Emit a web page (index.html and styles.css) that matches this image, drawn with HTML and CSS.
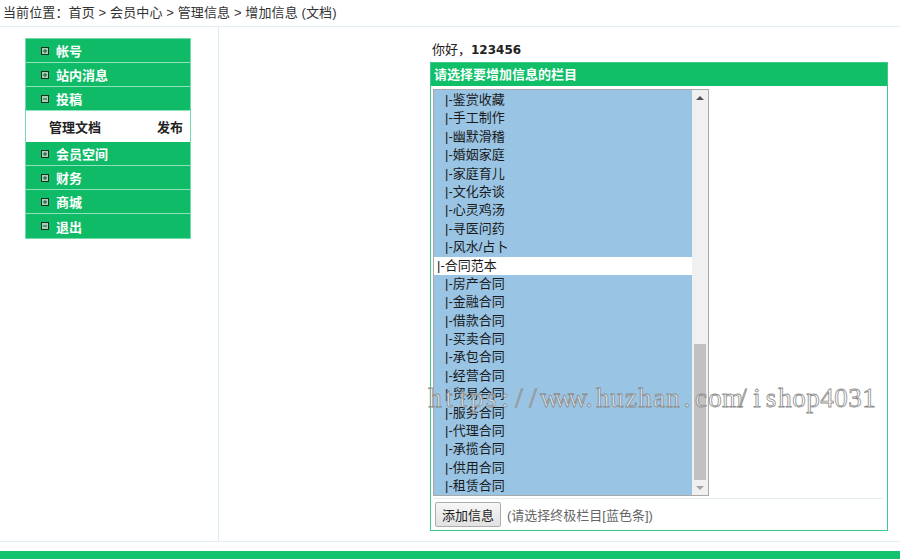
FILE: index.html
```html
<!DOCTYPE html>
<html lang="zh-CN">
<head>
<meta charset="utf-8">
<title>增加信息</title>
<link rel="stylesheet" href="styles.css">
</head>
<body>
<div class="crumb">当前位置：首页 &gt; 会员中心 &gt; 管理信息 &gt; 增加信息 (文档)</div>
<div class="main">
  <aside class="side">
    <ul class="menu">
      <li class="mi"><svg class="ico" viewBox="0 0 8 8"><rect x="0.5" y="0.5" width="7" height="7"/><path d="M2 4H6M4 2V6"/></svg>帐号</li>
      <li class="mi"><svg class="ico" viewBox="0 0 8 8"><rect x="0.5" y="0.5" width="7" height="7"/><path d="M2 4H6M4 2V6"/></svg>站内消息</li>
      <li class="mi"><svg class="ico" viewBox="0 0 8 8"><rect x="0.5" y="0.5" width="7" height="7"/><path d="M2 4H6"/></svg>投稿</li>
      <li class="sub"><span>管理文档</span><span>发布</span></li>
      <li class="mi"><svg class="ico" viewBox="0 0 8 8"><rect x="0.5" y="0.5" width="7" height="7"/><path d="M2 4H6M4 2V6"/></svg>会员空间</li>
      <li class="mi"><svg class="ico" viewBox="0 0 8 8"><rect x="0.5" y="0.5" width="7" height="7"/><path d="M2 4H6M4 2V6"/></svg>财务</li>
      <li class="mi"><svg class="ico" viewBox="0 0 8 8"><rect x="0.5" y="0.5" width="7" height="7"/><path d="M2 4H6M4 2V6"/></svg>商城</li>
      <li class="mi"><svg class="ico" viewBox="0 0 8 8"><rect x="0.5" y="0.5" width="7" height="7"/><path d="M2 4H6"/></svg>退出</li>
    </ul>
  </aside>
  <section class="content">
    <p class="hello">你好，<b class="uname">123456</b></p>
    <div class="panel">
      <div class="panel-head">请选择要增加信息的栏目</div>
      <div class="panel-body">
        <div class="listbox">
          <div class="opts">
            <div class="opt child">|-鉴赏收藏</div>
            <div class="opt child">|-手工制作</div>
            <div class="opt child">|-幽默滑稽</div>
            <div class="opt child">|-婚姻家庭</div>
            <div class="opt child">|-家庭育儿</div>
            <div class="opt child">|-文化杂谈</div>
            <div class="opt child">|-心灵鸡汤</div>
            <div class="opt child">|-寻医问药</div>
            <div class="opt child">|-风水/占卜</div>
            <div class="opt top">|-合同范本</div>
            <div class="opt child">|-房产合同</div>
            <div class="opt child">|-金融合同</div>
            <div class="opt child">|-借款合同</div>
            <div class="opt child">|-买卖合同</div>
            <div class="opt child">|-承包合同</div>
            <div class="opt child">|-经营合同</div>
            <div class="opt child">|-贸易合同</div>
            <div class="opt child">|-服务合同</div>
            <div class="opt child">|-代理合同</div>
            <div class="opt child">|-承揽合同</div>
            <div class="opt child">|-供用合同</div>
            <div class="opt child">|-租赁合同</div>
          </div>
          <div class="sbar">
            <div class="arr up"></div>
            <div class="track"><div class="thumb"></div></div>
            <div class="arr down"></div>
          </div>
        </div>
        <div class="actions">
          <button class="btn" type="button">添加信息</button>
          <span class="hint">(请选择终极栏目[蓝色条])</span>
        </div>
      </div>
    </div>
  </section>
</div>
<div class="foot"></div>
<div class="wm"><span>h</span><span>t</span><span>t</span><span>p</span><span>s</span><span>:</span><span>/</span><span>/</span><span>w</span><span>w</span><span>w</span><span>.</span><span>h</span><span>u</span><span>z</span><span>h</span><span>a</span><span>n</span><span>.</span><span>c</span><span>o</span><span>m</span><span>/</span><span>i</span><span>s</span><span>h</span><span>o</span><span>p</span><span>4</span><span>0</span><span>3</span><span>1</span></div>
</body>
</html>
```

FILE: styles.css
```css
html, body {
  margin: 0;
  padding: 0;
  overflow: hidden;
}
body {
  width: 900px;
  height: 559px;
  background: #fff;
  font-family: "Liberation Sans", "Noto Sans CJK SC", sans-serif;
  font-size: 13px;
  color: #333;
  position: relative;
}
.crumb {
  height: 26px;
  line-height: 26px;
  padding-left: 3px;
  border-bottom: 1px solid #dff0f6;
  color: #333;
  letter-spacing: 0.12px;
}
.main {
  display: flex;
  height: 514px;
  border-bottom: 1px solid #dff0f6;
}
.side {
  width: 218px;
  border-right: 1px solid #dceef5;
  flex: none;
}
.menu {
  list-style: none;
  margin: 11px 0 0 25px;
  padding: 0;
  width: 166px;
  box-sizing: border-box;
  border: 1px solid #72d9aa;
}
.mi {
  height: 23px;
  border-bottom: 1px solid #8fe2bb;
  background: #0fbb66;
  color: #fff;
  font-weight: bold;
  display: flex;
  align-items: center;
  padding-left: 15px;
}
.mi:last-child {
  border-bottom: 0;
  height: 24px;
}
.ico {
  width: 8px;
  height: 8px;
  margin-right: 7px;
  flex: none;
}
.ico rect {
  fill: #a9ceb5;
  stroke: #12301f;
  stroke-width: 1;
}
.ico path {
  stroke: #24503a;
  stroke-width: 1;
  fill: none;
}
.sub {
  height: 31px;
  display: flex;
  align-items: center;
  justify-content: space-between;
  padding: 0 7px 0 23px;
  font-weight: bold;
  color: #222;
  background: #fff;
}
.content {
  flex: 1;
  padding: 13px 0 0 211px;
}
.hello {
  margin: 0 0 2px 2px;
  line-height: 20px;
  color: #222;
}
.uname {
  font-family: "DejaVu Sans", sans-serif;
  font-size: 12px;
}
.panel {
  width: 458px;
  box-sizing: border-box;
  border: 1px solid #3cc98a;
}
.panel-head {
  height: 23px;
  line-height: 23px;
  background: #10bf68;
  color: #fff;
  font-weight: bold;
  padding-left: 3px;
}
.panel-body {
  padding: 3px 2px 2px 2px;
}
.listbox {
  width: 276px;
  height: 407px;
  box-sizing: border-box;
  border: 1px solid #a9a9a9;
  display: flex;
  overflow: hidden;
}
.opts {
  flex: 1;
  background: #99c4e4;
  overflow: hidden;
  padding-top: 1px;
}
.opt {
  height: 18.4px;
  line-height: 18.4px;
  color: #1a1a1a;
  white-space: nowrap;
}
.opt.child {
  padding-left: 11px;
}
.opt.top {
  padding-left: 3px;
  background: #fff;
}
.sbar {
  width: 16px;
  flex: none;
  background: #f0f0f0;
  display: flex;
  flex-direction: column;
}
.arr {
  height: 16px;
  flex: none;
  display: flex;
  align-items: center;
  justify-content: center;
}
.arr.up::before {
  content: "";
  border-left: 4px solid transparent;
  border-right: 4px solid transparent;
  border-bottom: 4px solid #505050;
}
.arr.down {
  height: 15px;
}
.arr.down::before {
  content: "";
  border-left: 4px solid transparent;
  border-right: 4px solid transparent;
  border-top: 4px solid #a3a3a3;
}
.track {
  flex: 1;
  display: flex;
  flex-direction: column;
  justify-content: flex-end;
  padding: 0 2px;
}
.thumb {
  height: 136px;
  background: #c1c1c1;
}
.actions {
  margin: 2px 2px 0 1px;
  border-top: 1px solid #e2eeee;
  padding: 3px 0 1px 0;
  display: flex;
  align-items: center;
}
.btn {
  height: 25px;
  padding: 0 6px;
  margin: 0 0 0 1px;
  font-family: "Liberation Sans", "Noto Sans CJK SC", sans-serif;
  font-size: 13px;
  color: #222;
  border: 1px solid #adadad;
  border-radius: 2px;
  background: linear-gradient(#f7f7f7, #e1e1e1);
}
.hint {
  margin-left: 6px;
  color: #666;
}
.foot {
  margin-top: 9px;
  height: 8px;
  background: #12c26c;
}
.wm {
  position: absolute;
  left: 428px;
  top: 385px;
  display: flex;
  font-family: "Liberation Serif", serif;
  font-size: 27px;
  line-height: 27px;
  color: rgba(255, 255, 255, 0.6);
  -webkit-text-stroke: 0.8px #8c8c8c;
  pointer-events: none;
  white-space: nowrap;
}
.wm span {
  width: 14px;
  text-align: center;
}
```
